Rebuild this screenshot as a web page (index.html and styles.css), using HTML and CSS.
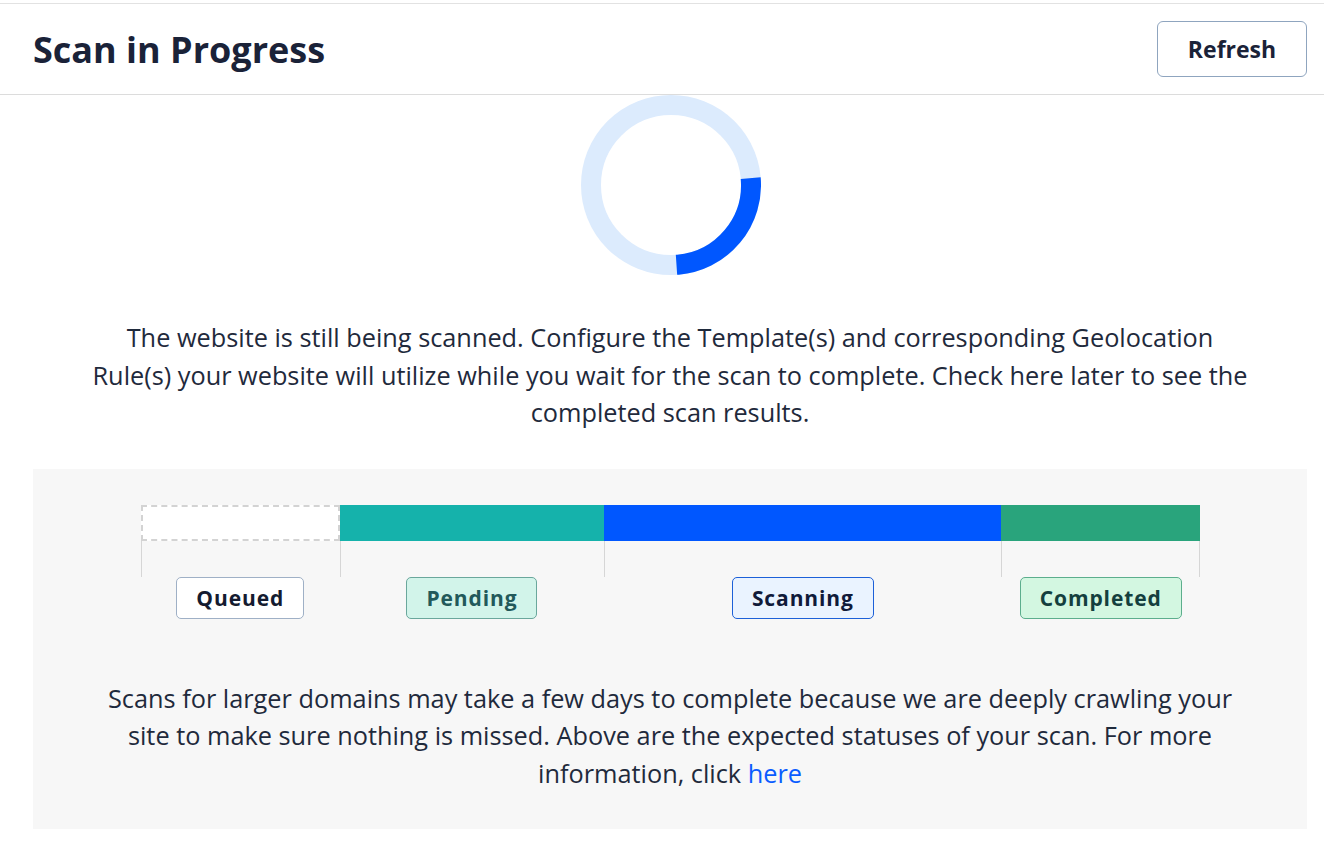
FILE: index.html
```html
<!DOCTYPE html>
<html lang="en">
<head>
<meta charset="utf-8">
<title>Scan in Progress</title>
<link rel="stylesheet" href="styles.css">
</head>
<body>
<div class="page">
  <header class="header">
    <h1 class="title">Scan in Progress</h1>
    <button class="btn">Refresh</button>
  </header>
  <main class="content">
    <div class="spinner">
      <svg width="180" height="180" viewBox="0 0 180 180">
        <circle cx="90" cy="90" r="80" fill="none" stroke="#dcebfd" stroke-width="20"/>
        <circle cx="90" cy="90" r="80" fill="none" stroke="#0057ff" stroke-width="20" stroke-dasharray="127 400" transform="rotate(-5 90 90)"/>
      </svg>
    </div>
    <p class="intro">The website is still being scanned. Configure the Template(s) and corresponding Geolocation<br>Rule(s) your website will utilize while you wait for the scan to complete. Check here later to see the<br>completed scan results.</p>
    <section class="panel">
      <div class="track">
        <div class="step step-queued">
          <div class="seg"></div>
          <div class="tick"></div>
          <span class="badge badge-queued">Queued</span>
        </div>
        <div class="step step-pending">
          <div class="seg"></div>
          <div class="tick"></div>
          <span class="badge badge-pending">Pending</span>
        </div>
        <div class="step step-scanning">
          <div class="seg"></div>
          <div class="tick"></div>
          <span class="badge badge-scanning">Scanning</span>
        </div>
        <div class="step step-completed">
          <div class="seg"></div>
          <div class="tick tick-end"></div>
          <span class="badge badge-completed">Completed</span>
        </div>
      </div>
      <p class="note">Scans for larger domains may take a few days to complete because we are deeply crawling your<br>site to make sure nothing is missed. Above are the expected statuses of your scan. For more<br>information, click <a href="#" class="link">here</a></p>
    </section>
  </main>
</div>
</body>
</html>
```

FILE: styles.css
```css
* { box-sizing: border-box; }
html, body { margin: 0; padding: 0; background: #fff; }
body {
  font-family: "Open Sans", "Liberation Sans", sans-serif;
  color: #1b2538;
}
.page { padding-top: 3px; }
.header {
  display: flex;
  align-items: center;
  justify-content: space-between;
  height: 92px;
  border-top: 1px solid #e2e2e2;
  border-bottom: 1px solid #dcdcdc;
  padding: 0 17px 0 33px;
}
.title {
  margin: 0;
  font-size: 36px;
  font-weight: 700;
  color: #1a2238;
}
.btn {
  width: 150px;
  height: 56px;
  background: #fff;
  border: 1px solid #8fa5bf;
  border-radius: 6px;
  font-family: inherit;
  font-size: 23px;
  font-weight: 700;
  color: #1a2238;
  cursor: pointer;
}
.content {
  padding: 0 17px 0 33px;
  display: flex;
  flex-direction: column;
  align-items: center;
}
.spinner { display: flex; justify-content: center; margin-left: 2px; }
.spinner svg { display: block; }
.intro {
  margin: 44px 0 0;
  text-align: center;
  font-size: 25.3px;
  line-height: 37.5px;
  color: #1f2a3c;
  white-space: nowrap;
}
.panel {
  margin-top: 37px;
  width: 100%;
  background: #f7f7f7;
  padding: 36px 0 37px;
}
.track { display: flex; margin: 0 107px 0 108px; }
.step { display: flex; flex-direction: column; align-items: center; position: relative; }
.step-queued { flex: 3; }
.step-pending { flex: 4; }
.step-scanning { flex: 6; }
.step-completed { flex: 3; }
.seg { width: 100%; height: 36px; }
.step-queued .seg { background: #fff; border: 2px dashed #d3d3d3; }
.step-pending .seg { background: #15b2ab; }
.step-scanning .seg { background: #0057ff; }
.step-completed .seg { background: #29a47c; }
.tick {
  align-self: flex-start;
  width: 1px;
  height: 36px;
  background: #d6d6d6;
}
.tick-end {
  position: absolute;
  left: 0;
  top: 36px;
}
.step-completed::after {
  content: "";
  position: absolute;
  right: 0;
  top: 36px;
  width: 1px;
  height: 36px;
  background: #d6d6d6;
}
.badge {
  display: inline-block;
  height: 42px;
  line-height: 40px;
  padding: 0 19px;
  border: 1px solid;
  border-radius: 5px;
  font-size: 21px;
  font-weight: 700;
  letter-spacing: 0.9px;
}
.step-completed .badge { margin-top: 36px; }
.badge-queued { background: #fff; border-color: #9fb0c6; color: #141b30; }
.badge-pending { background: #d2f4ea; border-color: #6aa79c; color: #22595a; }
.badge-scanning { background: #eaf3ff; border-color: #1c60d8; color: #101a3a; }
.badge-completed { background: #d3f7e1; border-color: #5cae8d; color: #143f3e; }
.note {
  margin: 61px 0 0;
  text-align: center;
  font-size: 25.3px;
  line-height: 37.5px;
  color: #1f2a3c;
  white-space: nowrap;
}
.link { color: #0a5cff; text-decoration: none; }
```
